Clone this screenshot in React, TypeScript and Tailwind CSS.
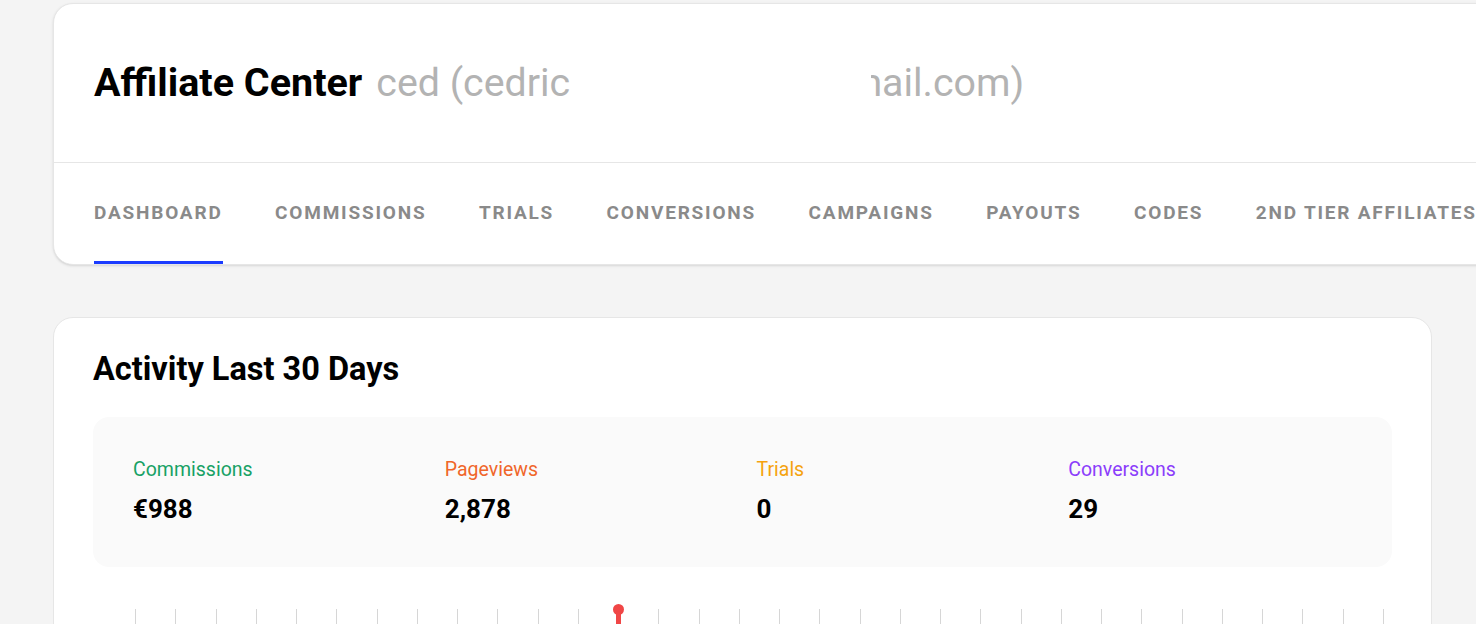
const tabs = [
  "Dashboard",
  "Commissions",
  "Trials",
  "Conversions",
  "Campaigns",
  "Payouts",
  "Codes",
  "2nd Tier Affiliates",
];

const stats = [
  { label: "Commissions", value: "€988", color: "text-[#17a165]" },
  { label: "Pageviews", value: "2,878", color: "text-[#f0662a]" },
  { label: "Trials", value: "0", color: "text-[#f5a30f]" },
  { label: "Conversions", value: "29", color: "text-[#8b3dfb]" },
];

const ticks = Array.from({ length: 32 }, (_, i) => i);

const App = () => {
  return (
    <div className="min-h-screen overflow-hidden bg-[#f4f4f4] pt-[3px] pl-[53px] font-['Roboto','Liberation_Sans',sans-serif] text-black">
      <section className="w-[1460px] rounded-[20px] border border-[#e6e6e6] bg-white shadow-sm">
        <header className="flex h-[158px] items-center gap-[14px] px-10 leading-[48px] whitespace-nowrap">
          <h1 className="text-[39.5px] font-bold">Affiliate Center</h1>
          <div className="flex text-[39.3px] text-[#b3b3b3]">
            <span>ced (cedric</span>
            <span className="ml-[301px] inline-flex w-[153px] justify-end overflow-hidden">
              <span className="shrink-0">mail.com)</span>
            </span>
          </div>
        </header>
        <nav className="flex h-[102px] gap-[52.5px] border-t border-[#e6e6e6] px-10">
          {tabs.map((tab, i) => (
            <a
              key={tab}
              href="#"
              className={
                i === 0
                  ? "flex items-center border-b-[3px] border-[#1b3cff] pt-[2px] text-[19px] font-bold uppercase tracking-[1.8px] whitespace-nowrap text-[#8a8a8a]"
                  : "flex items-center border-b-[3px] border-transparent pt-[2px] text-[19px] font-bold uppercase tracking-[1.8px] whitespace-nowrap text-[#8a8a8a]"
              }
            >
              {tab}
            </a>
          ))}
        </nav>
      </section>

      <section className="mt-[52px] w-[1379px] rounded-[20px] border border-[#e6e6e6] bg-white px-[39px] pt-[31px] pb-10">
        <h2 className="text-[32.5px] leading-[40px] font-bold">Activity Last 30 Days</h2>

        <div className="mt-[28px] grid grid-cols-4 gap-x-7 rounded-2xl bg-[#fafafa] px-10 pt-[39px] pb-[42px]">
          {stats.map((s) => (
            <div key={s.label}>
              <p className={`text-[19.5px] leading-[28px] ${s.color}`}>{s.label}</p>
              <p className="mt-[9px] text-[26px] leading-[32px] font-bold">{s.value}</p>
            </div>
          ))}
        </div>

        <div className="mt-[42px] flex h-[40px] justify-between pr-[8px] pl-[42px]">
          {ticks.map((i) =>
            i === 12 ? (
              <div key={i} className="relative w-px bg-[#d6d6d6]">
                <span className="absolute -top-[5px] -left-[5px] h-[11px] w-[11px] rounded-full bg-[#f04646]" />
                <span className="absolute top-[2px] -left-[2px] h-[40px] w-[5px] rounded-sm bg-[#f04646]" />
              </div>
            ) : (
              <div key={i} className="w-px bg-[#d6d6d6]" />
            )
          )}
        </div>
      </section>
    </div>
  );
};

export default App;
